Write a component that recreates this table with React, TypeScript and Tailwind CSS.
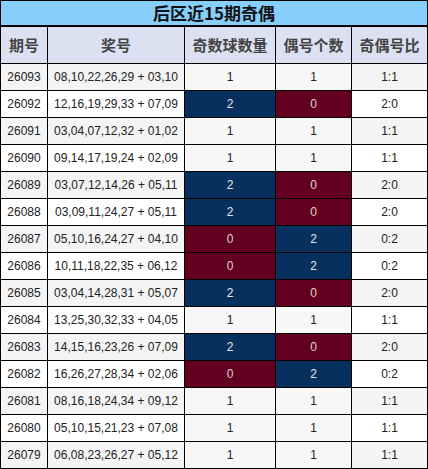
import React from "react";

const rows: [string, string, number, number, string][] = [
  ["26093", "08,10,22,26,29 + 03,10", 1, 1, "1:1"],
  ["26092", "12,16,19,29,33 + 07,09", 2, 0, "2:0"],
  ["26091", "03,04,07,12,32 + 01,02", 1, 1, "1:1"],
  ["26090", "09,14,17,19,24 + 02,09", 1, 1, "1:1"],
  ["26089", "03,07,12,14,26 + 05,11", 2, 0, "2:0"],
  ["26088", "03,09,11,24,27 + 05,11", 2, 0, "2:0"],
  ["26087", "05,10,16,24,27 + 04,10", 0, 2, "0:2"],
  ["26086", "10,11,18,22,35 + 06,12", 0, 2, "0:2"],
  ["26085", "03,04,14,28,31 + 05,07", 2, 0, "2:0"],
  ["26084", "13,25,30,32,33 + 04,05", 1, 1, "1:1"],
  ["26083", "14,15,16,23,26 + 07,09", 2, 0, "2:0"],
  ["26082", "16,26,27,28,34 + 02,06", 0, 2, "0:2"],
  ["26081", "08,16,18,24,34 + 09,12", 1, 1, "1:1"],
  ["26080", "05,10,15,21,23 + 07,08", 1, 1, "1:1"],
  ["26079", "06,08,23,26,27 + 05,12", 1, 1, "1:1"],
];

function cellColor(v: number) {
  if (v === 2) return "bg-[#07305f] text-[#e8e8e8]";
  if (v === 0) return "bg-[#630020] text-[#e0d0d0]";
  return "bg-[#f6f7f6] text-[#222]";
}

export default function App() {
  return (
    <div
      className="w-[428px] border border-black bg-white"
      style={{ fontFamily: '"Liberation Sans", "Noto Sans CJK SC", sans-serif' }}
    >
      <div
        className="h-[26px] bg-[#87cefa] border-b-2 border-black flex items-center justify-center text-[17px] font-bold text-[#111]"
        style={{ fontFamily: '"Noto Sans CJK SC", sans-serif' }}
      >
        后区近15期奇偶
      </div>
      <div
        className="h-[37px] flex border-b border-black bg-[#dce1f2] text-[15px] font-bold text-[#444]"
        style={{ fontFamily: '"Noto Sans CJK SC", sans-serif' }}
      >
        <div className="w-[47px] border-r border-black flex items-center justify-center">期号</div>
        <div className="w-[137px] border-r border-black flex items-center justify-center">奖号</div>
        <div className="w-[91px] border-r border-black flex items-center justify-center">奇数球数量</div>
        <div className="w-[76px] border-r border-black flex items-center justify-center">偶号个数</div>
        <div className="w-[75px] flex items-center justify-center">奇偶号比</div>
      </div>
      {rows.map((r, i) => {
        const alt = i % 2 === 0 ? "bg-[#f4f4f4]" : "bg-white";
        const last = i === rows.length - 1;
        return (
          <div
            key={r[0]}
            className={`flex text-[12px] text-[#222] ${last ? "h-[26px]" : "h-[27px] border-b border-black"}`}
          >
            <div className={`w-[47px] border-r border-black flex items-center justify-center ${alt}`}>{r[0]}</div>
            <div className={`w-[137px] border-r border-black flex items-center justify-center ${alt}`}>{r[1]}</div>
            <div className={`w-[91px] border-r border-black flex items-center justify-center ${cellColor(r[2])}`}>{r[2]}</div>
            <div className={`w-[76px] border-r border-black flex items-center justify-center ${cellColor(r[3])}`}>{r[3]}</div>
            <div className={`w-[75px] flex items-center justify-center ${alt}`}>{r[4]}</div>
          </div>
        );
      })}
    </div>
  );
}
